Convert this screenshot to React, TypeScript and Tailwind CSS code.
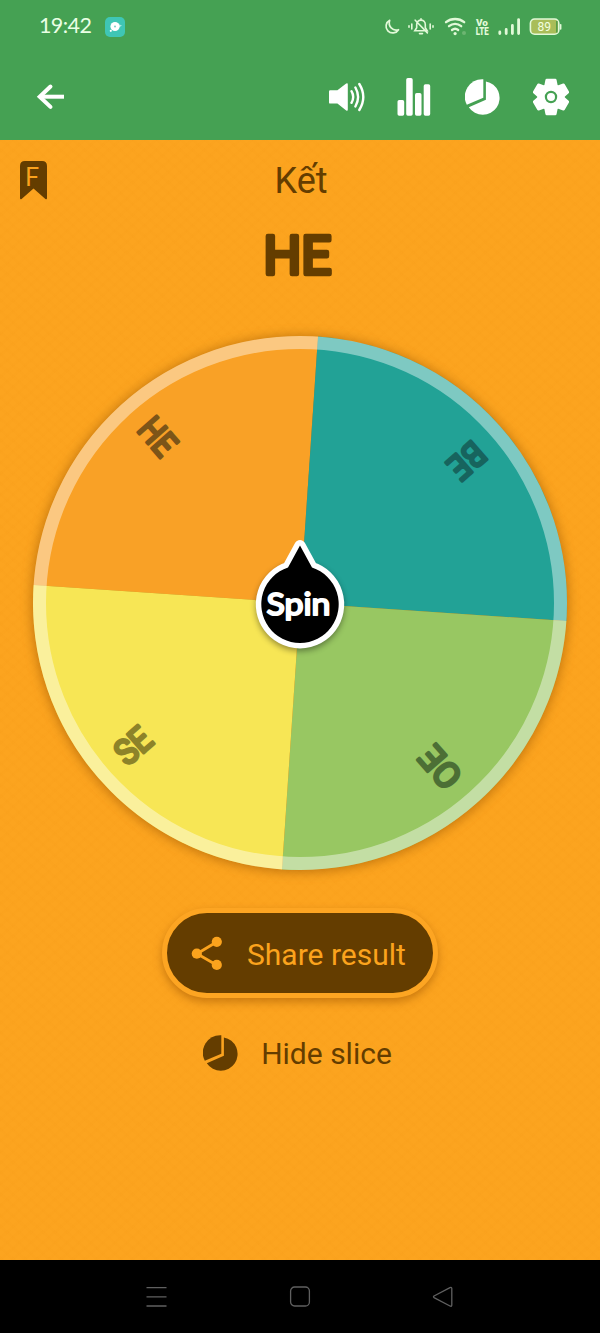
import React from 'react';

interface Slice {
  label: string;
  color: string;
  textColor: string;
  rotation: number;
  width: number;
}

const TILT = 3.87;
const CENTER_X = 300;
const CENTER_Y = 283;
const RADIUS = 267;

// rotation is clockwise from the top left quarter
const SLICES: Slice[] = [
  { label: 'HE', color: '#f9a126', textColor: '#7d5518', rotation: 0, width: 38 },
  { label: 'BE', color: '#22a296', textColor: '#17645e', rotation: 90, width: 37 },
  { label: 'OE', color: '#98c762', textColor: '#4c6f35', rotation: 180, width: 44 },
  { label: 'SE', color: '#f7e655', textColor: '#8d8329', rotation: 270, width: 37 },
];

const PieIcon: React.FC<{ size: number }> = ({ size }) => (
  <svg width={size} height={size} viewBox="0 0 36 36" fill="currentColor">
    <path d="M18.3.3v18.4L1.8 25.8A17.500 17.500 0 0 1 18.300.3Z" />
    <path d="M20.9 2.4A16.800 16.800 0 1 1 3.800 28.200L20.900 20.700Z" />
  </svg>
);

const StatusBar = () => (
  <div className="flex h-[54px] items-center justify-between pl-[39px] pr-[38px]">
    <div className="flex items-center gap-[14px]">
      <span className="w-[52px] whitespace-nowrap pb-[2px] font-['Lato',sans-serif] text-[21.5px] leading-none tracking-[-0.6px] text-[#eaffe5]">19:42</span>
      <svg width="20" height="20" viewBox="0 0 20 20">
        <rect width="20" height="20" rx="5" fill="#3fc6b5" />
        <path d="M13 7l4 1.5-3 2" fill="#a9e9df" />
        <circle cx="10" cy="9.5" r="4.6" fill="#fff" />
        <circle cx="10" cy="9.5" r="1" fill="#79cfc4" />
        <circle cx="5.8" cy="13.8" r="1.1" fill="#fff" />
      </svg>
    </div>
    <svg width="178" height="24" viewBox="384 15 178 24" fill="none" stroke="#e2f9d8" strokeLinecap="round">
      <path d="M389.7 20.3a6.7 6.7 0 1 0 8.8 9.4c-5.8 1.7-10.8-3.2-8.8-9.4Z" strokeWidth="1.7" strokeLinejoin="round" />
      {/* muted bell */}
      <g strokeWidth="1.6">
        <path d="M414.8 30.8h12.4l-1.9-3v-3.4a4.3 4.3 0 0 0-8.600 0v3.400ZM421 18.700v1M419.500 33.600h3M415.200 20.200l12.200 12.700" />
        <path d="M409 25.8v1.4M411.8 24v5M433 25.800v1.400M430.200 24v5" />
      </g>
      <g strokeWidth="2.3">
        <path d="M446 22.200c5.200-4.300 13-4.300 18.200 0M449 26.200c3.600-3 8.600-3 12.200 0M452 30c1.900-1.500 4.300-1.500 6.200 0" />
      </g>
      <circle cx="455.1" cy="33.6" r="1.6" fill="#e2f9d8" stroke="none" />
      <circle cx="464" cy="33" r="2" fill="#6db572" stroke="none" />
      <g fill="#e2f9d8" stroke="none" fontFamily="Roboto, sans-serif" fontWeight="900">
        <text x="476" y="26" fontSize="9.5" textLength="12" lengthAdjust="spacingAndGlyphs">Vo</text>
        <text x="475.7" y="35" fontSize="10.5" textLength="13" lengthAdjust="spacingAndGlyphs">LTE</text>
      </g>
      <g strokeWidth="2.8">
        <path d="M499.800 32v1.600M506.200 29.500v4.100M512.400 25.500v8.100M518.600 19.600v14" />
      </g>
      <rect x="530.4" y="19" width="28.4" height="15.2" rx="4.3" fill="#a9bd59" strokeWidth="1.6" />
      <path d="M556 21h1.600v11.500h-1.600z" fill="#579d49" stroke="none" />
      <path d="M560.600 24.800v4" strokeWidth="1.7" />
      <text x="537.4" y="30.9" fontSize="12.5" fill="#f2ffe0" stroke="none" fontFamily="Roboto, sans-serif" textLength="13.500" lengthAdjust="spacingAndGlyphs">89</text>
    </svg>
  </div>
);

const Toolbar = () => (
  <div className="flex h-[86px] items-center justify-between pl-9 pr-[31px] text-white">
    <button aria-label="Back">
      <svg width="29" height="28" viewBox="0 0 29 28" fill="none" stroke="currentColor" strokeWidth="4">
        <path d="M28 13.700H4" />
        <path d="M14.500 3.500L3.700 13.700l10.800 10.200" strokeLinecap="round" />
      </svg>
    </button>
    <div className="flex items-center gap-8">
      <button aria-label="Sound">
        <svg width="36" height="36" viewBox="0 0 36 36" fill="currentColor">
          <path d="M1.2 11.2h7.2l8.8-6.7q1.6-1 1.6 1v25q0 2-1.6 1l-8.800-6.900H1.200q-1.200 0-1.200-1.200v-11q0-1.200 1.200-1.200Z" />
          <path d="M22.5 12.2q3.4 5.8 0 11.6M26.4 8.5q5.4 9.5 0 19M30.300 5q8 13 0 26" fill="none" stroke="currentColor" strokeWidth="2.4" strokeLinecap="round" />
        </svg>
      </button>
      <button aria-label="Statistics">
        <svg width="34" height="38" viewBox="0 0 34 38" fill="currentColor">
          <rect x="0.5" y="22" width="6.7" height="15.7" rx="1.7" />
          <rect x="9.2" y="0" width="6.5" height="37.7" rx="1.7" />
          <rect x="18" y="15" width="6.5" height="22.7" rx="1.7" />
          <rect x="26.7" y="6.3" width="6.5" height="31.4" rx="1.7" />
        </svg>
      </button>
      <button aria-label="Slices" className="ml-[2px]">
        <PieIcon size={36} />
      </button>
      <button aria-label="Settings">
        <svg width="36" height="38" viewBox="-18 -19 36 38" fill="currentColor">
          <circle r="13.5" />
          {[0, 60, 120].map((a) => (
            <path key={a} transform={`rotate(${a})`} d="M-4.200-18.300h8.400q1.200 0 1.400 1.200l1.200 6.200v21.800l-1.200 6.200q-.2 1.200-1.400 1.200h-8.400q-1.200 0-1.400-1.200l-1.200-6.200v-21.800l1.200-6.200q.2-1.200 1.400-1.200Z" />
          ))}
          <circle r="5.1" fill="#fff" stroke="#45a153" strokeWidth="2.2" />
        </svg>
      </button>
    </div>
  </div>
);

const Wheel = () => (
  <svg width="600" height="568" viewBox="0 0 600 568" className="block">
    <defs>
      <filter id="wheelShadow" x="-10%" y="-10%" width="120%" height="120%">
        <feGaussianBlur stdDeviation="6" />
      </filter>
      <filter id="pinShadow" x="-20%" y="-20%" width="140%" height="140%">
        <feGaussianBlur stdDeviation="3" />
      </filter>
    </defs>
    <circle cx={CENTER_X} cy={CENTER_Y + 1} r={RADIUS + 1} fill="#8f4e00" opacity="0.55" filter="url(#wheelShadow)" />
    <g transform={`translate(${CENTER_X} ${CENTER_Y})`}>
      {SLICES.map((s) => (
        <g key={s.label} transform={`rotate(${TILT + s.rotation})`}>
          <path d={`M0 0H${-RADIUS}A${RADIUS} ${RADIUS} 0 0 1 0 ${-RADIUS}Z`} fill={s.color} />
          <text
            transform="rotate(45)"
            x="-238"
            y="10"
            fontFamily="Roboto, sans-serif"
            fontWeight="400"
            fontSize="35"
            textLength={s.width}
            lengthAdjust="spacingAndGlyphs"
            fill={s.textColor}
            stroke={s.textColor}
            strokeWidth="3"
            strokeLinejoin="round"
          >
            {s.label}
          </text>
        </g>
      ))}
      <circle r={RADIUS - 6.5} fill="none" stroke="#fff" strokeOpacity="0.42" strokeWidth="13" />
    </g>
    <circle cx="300" cy="287" r="44" fill="#000" opacity="0.4" filter="url(#pinShadow)" />
    <path
      d="M300 225.500L312 247.500A38.700 38.700 0 1 1 288 247.500Z"
      fill="#000"
      stroke="#fff"
      strokeWidth="11"
      strokeLinejoin="round"
      style={{ paintOrder: 'stroke' }}
    />
    <text
      x="266.500"
      y="294.700"
      fontFamily="Lato, sans-serif"
      fontWeight="400"
      fontSize="31"
      textLength="64"
      lengthAdjust="spacingAndGlyphs"
      fill="#fff"
      stroke="#fff"
      strokeWidth="2"
      strokeLinejoin="round"
    >
      Spin
    </text>
  </svg>
);

const NavBar = () => (
  <div className="flex h-[73px] items-center justify-between bg-black pl-[145px] pr-[146px] text-[#606060]">
    <svg width="22" height="22" viewBox="0 0 22 22" stroke="currentColor" strokeWidth="1.3">
      <path d="M1.500 1.700h20M1.500 10.900h20M1.500 20h20" />
    </svg>
    <svg width="22" height="22" viewBox="0 0 22 22" fill="none" stroke="currentColor" strokeWidth="1.3">
      <rect x="1.6" y="1" width="18.8" height="19" rx="4" />
    </svg>
    <svg width="22" height="22" viewBox="0 0 22 22" fill="none" stroke="currentColor" strokeWidth="1.3" strokeLinejoin="round">
      <path d="M2 10q-1 .8 0 1.600l16 8.400q1.800.8 1.800-1V2.600q0-1.800-1.800-1Z" />
    </svg>
  </div>
);

export default function App() {
  return (
    <div className="flex h-[1333px] w-[600px] flex-col overflow-hidden bg-[#fca41f] font-['Roboto',sans-serif] text-[#643d00]">
      <header className="h-[140px] bg-[#45a153]">
        <StatusBar />
        <Toolbar />
      </header>

      <main className="h-[1120px] bg-[repeating-linear-gradient(42deg,#ec8c0c0c_0_3px,transparent_3px_8px),repeating-linear-gradient(-42deg,#ec8c0c0c_0_3px,transparent_3px_8px)]">
        <div className="grid h-20 grid-cols-[80px_1fr_80px] items-center">
          <svg width="27" height="39" viewBox="0 0 27 39" className="ml-5 block">
            <path d="M5 0h17q5 0 5 5v32q0 2-1.600.9L13.500 27.500 1.600 37.900Q0 39 0 37V5q0-5 5-5Z" fill="#643d00" />
            <text x="5.200" y="24.500" fontFamily="Roboto, sans-serif" fontSize="25" fill="#fba31d">F</text>
          </svg>
          <h1 className="pl-[2px] pt-px text-center text-[36px] leading-none">Kết</h1>
        </div>

        <svg width="600" height="100" viewBox="0 0 600 100" className="block">
          <text
            x="263.500"
            y="53.700"
            fontFamily="Roboto, sans-serif"
            fontWeight="400"
            fontSize="53"
            textLength="68"
            lengthAdjust="spacingAndGlyphs"
            fill="#643d00"
            stroke="#643d00"
            strokeWidth="4.500"
            strokeLinejoin="round"
          >
            HE
          </text>
        </svg>

        <Wheel />

        <div className="flex flex-col items-center pt-5">
          <button className="flex h-[90px] w-[276px] items-center rounded-full border-[5px] border-[#fda522] bg-[#643d00] pl-6 text-[#fba31d] shadow-[0_4px_8px_#9b520080]">
            <svg width="32" height="34" viewBox="0 0 32 34" fill="currentColor">
              <path d="M26 5.800L6 17.700l20 11.500" fill="none" stroke="currentColor" strokeWidth="2.800" />
              <circle cx="25.800" cy="5.800" r="5.100" />
              <circle cx="5.800" cy="17.700" r="5.100" />
              <circle cx="25.800" cy="28.900" r="5.100" />
            </svg>
            <span className="ml-[24px] whitespace-nowrap pt-[2px] text-[30px]">Share result</span>
          </button>

          <button className="mt-[31px] flex items-center gap-[22px] pr-[5px]">
            <PieIcon size={36} />
            <span className="whitespace-nowrap pt-[2px] text-[30px]">Hide slice</span>
          </button>
        </div>
      </main>

      <NavBar />
    </div>
  );
}
